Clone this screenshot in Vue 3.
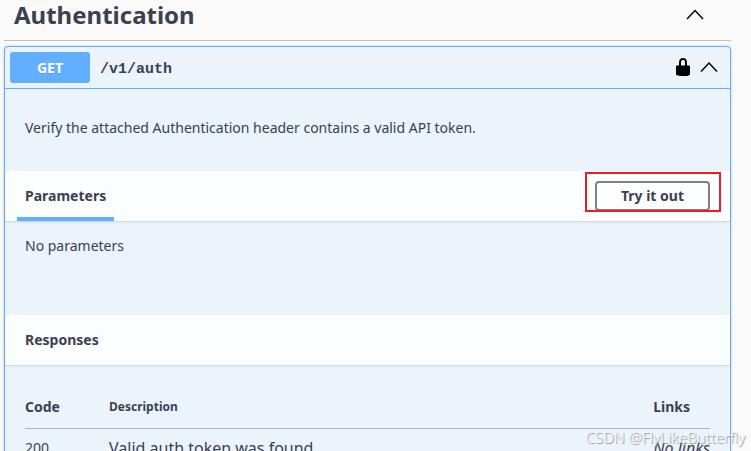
<template>
  <main class="api-docs">
    <section class="tag-section">
      <header class="tag-header">
        <h3 class="tag-title">Authentication</h3>
        <button class="icon-button" type="button" aria-label="Collapse section" @click="tagOpen = !tagOpen">
          <svg class="chevron" :class="{ closed: !tagOpen }" viewBox="0 0 20 20">
            <path d="M2 14L10 5.500l8 8.500" />
          </svg>
        </button>
      </header>

      <article v-if="tagOpen" class="opblock">
        <div class="opblock-summary">
          <span class="method">GET</span>
          <span class="path">/v1/auth</span>
          <button class="icon-button" type="button" aria-label="Authorize">
            <svg class="lock" viewBox="0 0 20 20">
              <path
                d="M15.8 7.500H14V4.600C14 1.700 12.700 0 10 0S6 1.700 6 4.600V7.500H4c-.6 0-1 .7-1 1.300V16c0 .5.4 1.100.9 1.200l1.200.4c.5.2 1.400.4 1.900.4h6c.5 0 1.300-.1 1.900-.3l1.200-.4c.5-.2.9-.8.9-1.300V8.800c0-.6-.6-1.300-1.200-1.300zM12 7.500H8V4.200C8 2.700 8.700 2 10 2s2 .7 2 2.200V7.500z"
              />
            </svg>
          </button>
          <button class="icon-button" type="button" aria-label="Collapse operation" @click="blockOpen = !blockOpen">
            <svg class="chevron" :class="{ closed: !blockOpen }" viewBox="0 0 20 20">
              <path d="M2 13.500L10 5l8 8.500" />
            </svg>
          </button>
        </div>

        <div v-if="blockOpen" class="opblock-body">
          <p class="description">Verify the attached Authentication header contains a valid API token.</p>

          <div class="section-header">
            <h4 class="section-title tab active">Parameters</h4>
            <div class="try-out">
              <button class="try-out-button" type="button">Try it out</button>
            </div>
          </div>
          <p class="no-parameters">No parameters</p>

          <div class="section-header">
            <h4 class="section-title">Responses</h4>
          </div>
          <div class="responses">
            <table class="responses-table">
              <thead>
                <tr>
                  <th class="col-code">Code</th>
                  <th class="col-description">Description</th>
                  <th class="col-links">Links</th>
                </tr>
              </thead>
              <tbody>
                <tr v-for="response in responses" :key="response.code">
                  <td class="col-code">{{ response.code }}</td>
                  <td class="response-text">{{ response.description }}</td>
                  <td class="col-links response-text"><i>No links</i></td>
                </tr>
              </tbody>
            </table>
          </div>
        </div>
      </article>
    </section>

    <div class="watermark">CSDN @FlyLikeButterfly</div>
  </main>
</template>

<script setup>
import { ref } from 'vue'

const tagOpen = ref(true)
const blockOpen = ref(true)

const responses = [{ code: '200', description: 'Valid auth token was found' }]
</script>

<style>
body {
  margin: 0;
  background: #fafafa;
}
</style>

<style scoped>
.api-docs {
  position: relative;
  box-sizing: border-box;
  height: 100vh;
  overflow: hidden;
  padding: 0 20px 0 4px;
  color: #3b4151;
  font-family: 'Segoe UI', 'Noto Sans', 'Open Sans', sans-serif;
  font-size: 14px;
  line-height: 20px;
}

.tag-header {
  display: flex;
  align-items: center;
  justify-content: space-between;
  height: 40px;
  padding: 0 26px 0 10px;
  border-bottom: 1px solid #bfc0c3;
}

.tag-title {
  margin: 0;
  padding-bottom: 10px;
  font-size: 24px;
  font-weight: 700;
  line-height: 30px;
}

.tag-header .icon-button {
  margin-bottom: 10px;
}

.icon-button {
  display: flex;
  padding: 0;
  border: 0;
  background: none;
  cursor: pointer;
}

.chevron {
  width: 20px;
  height: 20px;
  fill: none;
  stroke: #000;
  stroke-width: 1.5;
}

.chevron.closed {
  transform: rotate(180deg);
}

.lock {
  width: 20px;
  height: 20px;
  fill: #000;
}

.opblock {
  margin-top: 5px;
  border: 1px solid #61affe;
  border-radius: 4px;
  background: #ebf3fb;
  box-shadow: 0 0 3px rgba(0, 0, 0, 0.19);
}

.opblock-summary {
  display: flex;
  align-items: center;
  gap: 6px;
  padding: 5px 11px 5px 5px;
  border-bottom: 1px solid #61affe;
}

.method {
  width: 80px;
  border-radius: 3px;
  background: #61affe;
  color: #fff;
  font-weight: 700;
  line-height: 31px;
  text-align: center;
  text-shadow: 0 1px 0 rgba(0, 0, 0, 0.1);
}

.path {
  flex: 1;
  padding: 4px 0 0 4px;
  font-family: 'Liberation Mono', monospace;
  font-size: 15px;
  font-weight: 600;
}

.description {
  margin: 0;
  padding: 29px 20px 33px;
}

.section-header {
  position: relative;
  display: flex;
  align-items: center;
  justify-content: space-between;
  box-sizing: border-box;
  height: 50px;
  padding: 0 20px;
  background: #fcfdff;
  box-shadow: 0 1px 2px rgba(0, 0, 0, 0.15);
}

.section-title {
  margin: 0;
  font-size: 14px;
  font-weight: 700;
  line-height: 50px;
}

.tab {
  position: relative;
}

.tab.active::after {
  content: '';
  position: absolute;
  right: -8px;
  bottom: 0;
  left: -8px;
  height: 4px;
  background: #61affe;
}

.try-out {
  position: relative;
}

/* highlight frame around the button */
.try-out::after {
  content: '';
  position: absolute;
  inset: -9px -11px -1px -10px;
  border: 2px solid #ed1c24;
  pointer-events: none;
}

.try-out-button {
  display: block;
  box-sizing: border-box;
  height: 30px;
  padding: 0 24px;
  border: 2px solid #808080;
  border-radius: 4px;
  background: transparent;
  color: #3b4151;
  font-family: inherit;
  font-size: 14px;
  font-weight: 700;
  line-height: 24px;
  cursor: pointer;
}

.no-parameters {
  margin: 0;
  padding: 15px 20px 59px;
}

.responses {
  padding: 20px;
}

.responses-table {
  width: 100%;
  border-collapse: collapse;
}

.responses-table th {
  padding: 12px 0 11px;
  border-bottom: 1px solid #a9b1bf;
  font-weight: 700;
  text-align: left;
}

.responses-table td {
  padding: 9px 0 0;
  vertical-align: top;
}

.responses-table .col-code {
  width: 84px;
}

.responses-table .col-description {
  font-size: 12px;
}

.responses-table .col-links {
  width: 56px;
  white-space: nowrap;
}

.responses-table .response-text {
  font-size: 16px;
}

.watermark {
  position: absolute;
  right: 6px;
  bottom: 4px;
  color: #f4f6f8;
  font-size: 15px;
  font-weight: 300;
  text-shadow: 1px 1px 1px #888;
  pointer-events: none;
}
</style>
